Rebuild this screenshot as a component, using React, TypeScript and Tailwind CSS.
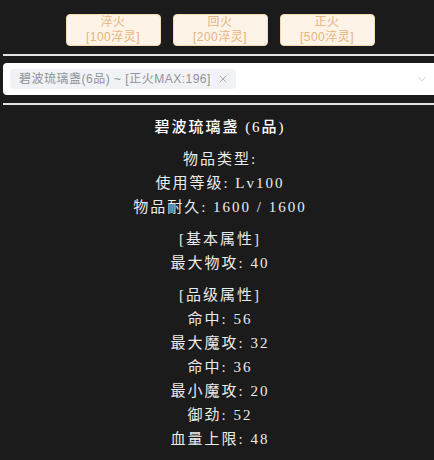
import { ChevronDown, X } from 'lucide-react';

const BUTTONS = [
  { name: '淬火', cost: '[100淬灵]' },
  { name: '回火', cost: '[200淬灵]' },
  { name: '正火', cost: '[500淬灵]' },
] as const;

const GROUPS = [
  ['物品类型:', '使用等级: Lv100', '物品耐久: 1600 / 1600'],
  ['[基本属性]', '最大物攻: 40'],
  ['[品级属性]', '命中: 56', '最大魔攻: 32', '命中: 36', '最小魔攻: 20', '御劲: 52', '血量上限: 48'],
];

const FONT = { fontFamily: "'Liberation Serif', 'Noto Sans CJK SC', serif" };
const UI_FONT = { fontFamily: "'Liberation Sans', 'Noto Sans CJK SC', sans-serif" };

export default function App() {
  return (
    <div className="min-h-[460px] w-full overflow-hidden bg-[#1b1b1b]">
      <div className="ml-[3px] w-[434px]">
        {/* Forge buttons */}
        <div className="flex justify-center gap-[12px] pt-[14px]">
          {BUTTONS.map((b) => (
            <button
              key={b.name}
              className="flex h-[32px] w-[95px] flex-col items-center justify-center rounded-[4px] border border-[#f5dab1] bg-[#fdf3e6] text-[12px] leading-[15px] tracking-[0.5px] text-[#e8b47c]"
              style={UI_FONT}
            >
              <span>{b.name}</span>
              <span>{b.cost}</span>
            </button>
          ))}
        </div>

        <div className="mt-[8px] h-[2px] bg-[#e2e2e2]" />

        {/* Select */}
        <div className="mt-[7px] flex h-[32px] items-center justify-between rounded-[4px] bg-white pl-[7px] pr-[8px]">
          <div
            className="flex h-[20px] items-center gap-[6px] rounded-[3px] bg-[#f0f2f5] pl-[9px] pr-[7px] text-[12px] text-[#909399]"
            style={UI_FONT}
          >
            <span className="tracking-[0.5px]">碧波琉璃盏(6品) ~ [正火MAX:196]</span>
            <X className="h-[12px] w-[12px]" strokeWidth={1.5} />
          </div>
          <ChevronDown className="h-[14px] w-[14px] text-[#c0c4cc]" strokeWidth={1.5} />
        </div>

        <div className="mt-[8px] h-[2px] bg-[#e2e2e2]" />

        {/* Item details */}
        <div className="pt-[10px] text-center text-[15px] leading-[24px] tracking-[2px]" style={FONT}>
          <p className="font-medium text-white">碧波琉璃盏 (6品)</p>
          {GROUPS.map((group, i) => (
            <div key={i} className="mt-[8px] text-[#ececec]">
              {group.map((line, j) => (
                <p key={j}>{line}</p>
              ))}
            </div>
          ))}
        </div>
      </div>
    </div>
  );
}
